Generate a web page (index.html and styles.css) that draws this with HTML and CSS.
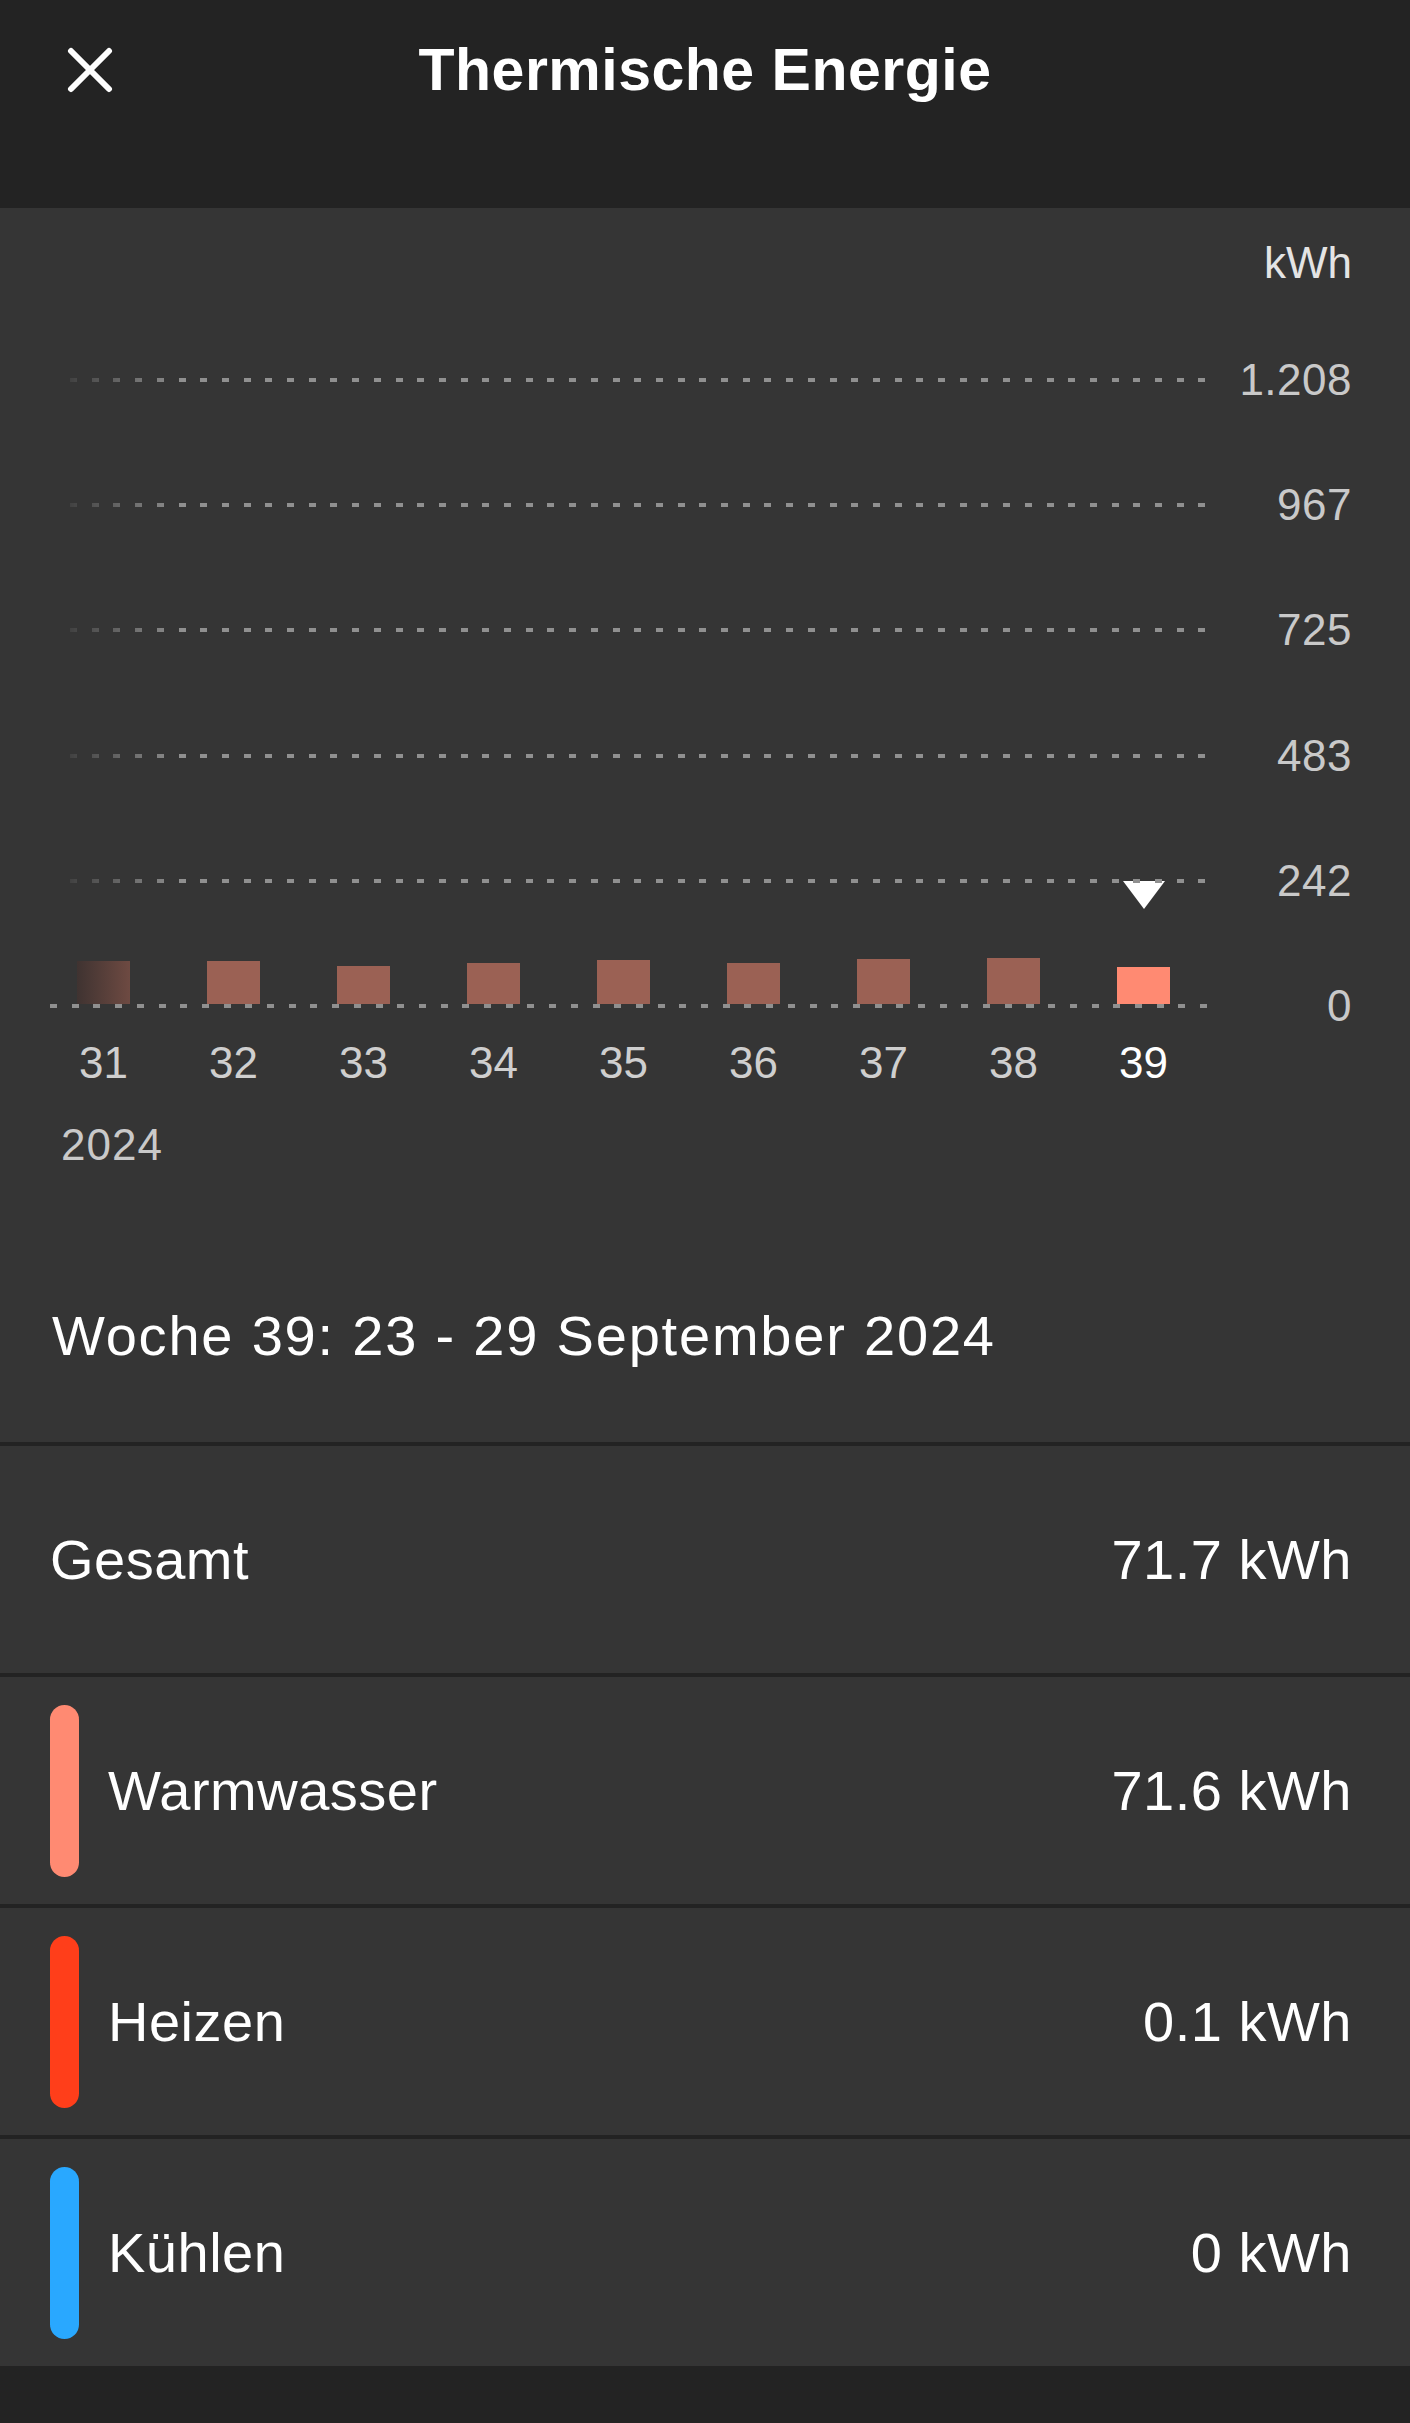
FILE: index.html
```html
<!DOCTYPE html>
<html lang="de">
<head>
    <meta charset="UTF-8">
    <meta name="viewport" content="width=device-width, initial-scale=1.0">
    <title>Thermische Energie</title>
    <link rel="stylesheet" href="styles.css">
</head>
<body>
    <header class="topbar">
        <div class="topbar-left">
            <svg class="close-icon" width="46" height="46" viewBox="0 0 46 46">
                <path d="M4 4 L42 42 M42 4 L4 42" stroke="#fff" stroke-width="6" stroke-linecap="round" fill="none"/>
            </svg>
        </div>
        <h1 class="title">Thermische Energie</h1>
        <div></div>
    </header>

    <section class="chart">
        <div class="unit">kWh</div>
        <div class="plot">
            <div class="ticks">
                <div class="tick"><span class="tick-line fade"></span><span class="tick-label">1.208</span></div>
                <div class="tick"><span class="tick-line fade"></span><span class="tick-label">967</span></div>
                <div class="tick"><span class="tick-line fade"></span><span class="tick-label">725</span></div>
                <div class="tick"><span class="tick-line fade"></span><span class="tick-label">483</span></div>
                <div class="tick"><span class="tick-line fade"></span><span class="tick-label">242</span></div>
                <div class="tick"><span class="tick-line"></span><span class="tick-label">0</span></div>
            </div>
            <div class="bars">
                <div class="week">
                    <div class="week-plot"><div class="bar faded" style="height: 43px"></div></div>
                    <div class="week-label">31</div>
                </div>
                <div class="week">
                    <div class="week-plot"><div class="bar" style="height: 43px"></div></div>
                    <div class="week-label">32</div>
                </div>
                <div class="week">
                    <div class="week-plot"><div class="bar" style="height: 38px"></div></div>
                    <div class="week-label">33</div>
                </div>
                <div class="week">
                    <div class="week-plot"><div class="bar" style="height: 41px"></div></div>
                    <div class="week-label">34</div>
                </div>
                <div class="week">
                    <div class="week-plot"><div class="bar" style="height: 44px"></div></div>
                    <div class="week-label">35</div>
                </div>
                <div class="week">
                    <div class="week-plot"><div class="bar" style="height: 41px"></div></div>
                    <div class="week-label">36</div>
                </div>
                <div class="week">
                    <div class="week-plot"><div class="bar" style="height: 45.5px"></div></div>
                    <div class="week-label">37</div>
                </div>
                <div class="week">
                    <div class="week-plot"><div class="bar" style="height: 46.5px"></div></div>
                    <div class="week-label">38</div>
                </div>
                <div class="week selected">
                    <div class="week-plot">
                        <div class="marker"></div>
                        <div class="bar" style="height: 37.5px"></div>
                    </div>
                    <div class="week-label">39</div>
                </div>
            </div>
        </div>
        <div class="year">2024</div>
        <div class="period">Woche 39: 23 - 29 September 2024</div>
    </section>

    <div class="list">
        <div class="row">
            <span class="row-name">Gesamt</span>
            <span class="row-value">71.7 kWh</span>
        </div>
        <div class="row with-pill">
            <span class="pill warm"></span>
            <span class="row-name">Warmwasser</span>
            <span class="row-value">71.6 kWh</span>
        </div>
        <div class="row with-pill">
            <span class="pill heat"></span>
            <span class="row-name">Heizen</span>
            <span class="row-value">0.1 kWh</span>
        </div>
        <div class="row with-pill">
            <span class="pill cool"></span>
            <span class="row-name">Kühlen</span>
            <span class="row-value">0 kWh</span>
        </div>
    </div>
</body>
</html>
```

FILE: styles.css
```css
body {
    margin: 0;
    padding: 0;
    background: #232323;
    color: #fff;
    font-family: 'Liberation Sans', Arial, sans-serif;
}

.topbar {
    display: grid;
    grid-template-columns: 1fr auto 1fr;
    align-items: center;
    height: 208px;
    box-sizing: border-box;
    padding-top: 30px;
    align-content: start;
    background: #232323;
}

.topbar-left {
    padding-left: 67px;
    height: 80px;
    display: flex;
    align-items: center;
}

.title {
    margin: 0;
    font-size: 59px;
    line-height: 80px;
    font-weight: bold;
    letter-spacing: 0.5px;
    color: #fff;
}

/* chart */

.chart {
    background: #353535;
    padding: 33px 58px 78.3px 0;
}

.unit {
    text-align: right;
    font-size: 44px;
    line-height: 44px;
    color: #e4e4e4;
}

.plot {
    display: grid;
    grid-template-columns: 1158px 144px;
    margin: 32.4px 0 0 50px;
}

.ticks {
    grid-area: 1 / 1 / 2 / 3;
    align-self: start;
}

.tick {
    display: flex;
    align-items: center;
    height: 125.2px;
}

.tick-line {
    flex: 1;
    height: 4px;
    background: repeating-linear-gradient(to right, #909090 0, #909090 7px, transparent 7px, transparent 21.7px);
}

.tick-line.fade {
    margin-left: 20px;
    -webkit-mask-image: linear-gradient(to right, rgba(0, 0, 0, 0.15), #000 110px);
    mask-image: linear-gradient(to right, rgba(0, 0, 0, 0.15), #000 110px);
}

.tick-label {
    width: 144px;
    text-align: right;
    font-size: 44px;
    line-height: 44px;
    letter-spacing: 0.5px;
    color: #c9c9c9;
}

.bars {
    grid-area: 1 / 1 / 2 / 2;
    align-self: start;
    display: flex;
    gap: 77px;
    padding-left: 27px;
}

.week {
    width: 53px;
    display: flex;
    flex-direction: column;
    align-items: center;
}

.week-plot {
    height: 687px;
    width: 100%;
    display: flex;
    flex-direction: column;
    justify-content: flex-end;
    align-items: center;
}

.bar {
    width: 100%;
    background: #9b6154;
}

.bar.faded {
    background: linear-gradient(to right, #3f3331, #6e4a42);
}

.selected .bar {
    background: #ff8a72;
}

.marker {
    width: 0;
    height: 0;
    border-left: 21px solid transparent;
    border-right: 21px solid transparent;
    border-top: 28px solid #fff;
    margin-bottom: 58px;
}

.week-label {
    margin-top: 37px;
    font-size: 44px;
    line-height: 44px;
    color: #cfcfcf;
    white-space: nowrap;
}

.selected .week-label {
    color: #fff;
}

.year {
    margin: 38px 0 0 61px;
    font-size: 44px;
    line-height: 44px;
    letter-spacing: 1px;
    color: #c9c9c9;
}

.period {
    margin: 140.4px 0 0 52px;
    font-size: 56px;
    line-height: 56px;
    letter-spacing: 1.8px;
    color: #fff;
}

/* totals list */

.list {
    display: flex;
    flex-direction: column;
    gap: 4px;
    padding-top: 4px;
    background: #232323;
}

.row {
    height: 227px;
    display: flex;
    align-items: center;
    padding: 0 58px 0 50px;
    background: #353535;
    font-size: 56px;
    line-height: 56px;
    letter-spacing: 0.5px;
}

.row-name {
    flex: 1;
}

.row-value {
    text-align: right;
}

.pill {
    align-self: stretch;
    width: 29px;
    margin: 28px 29px 27px 0;
    border-radius: 15px;
}

.pill.warm {
    background: #ff8a72;
}

.pill.heat {
    background: #ff3e1a;
}

.pill.cool {
    background: #29a8ff;
}
```
